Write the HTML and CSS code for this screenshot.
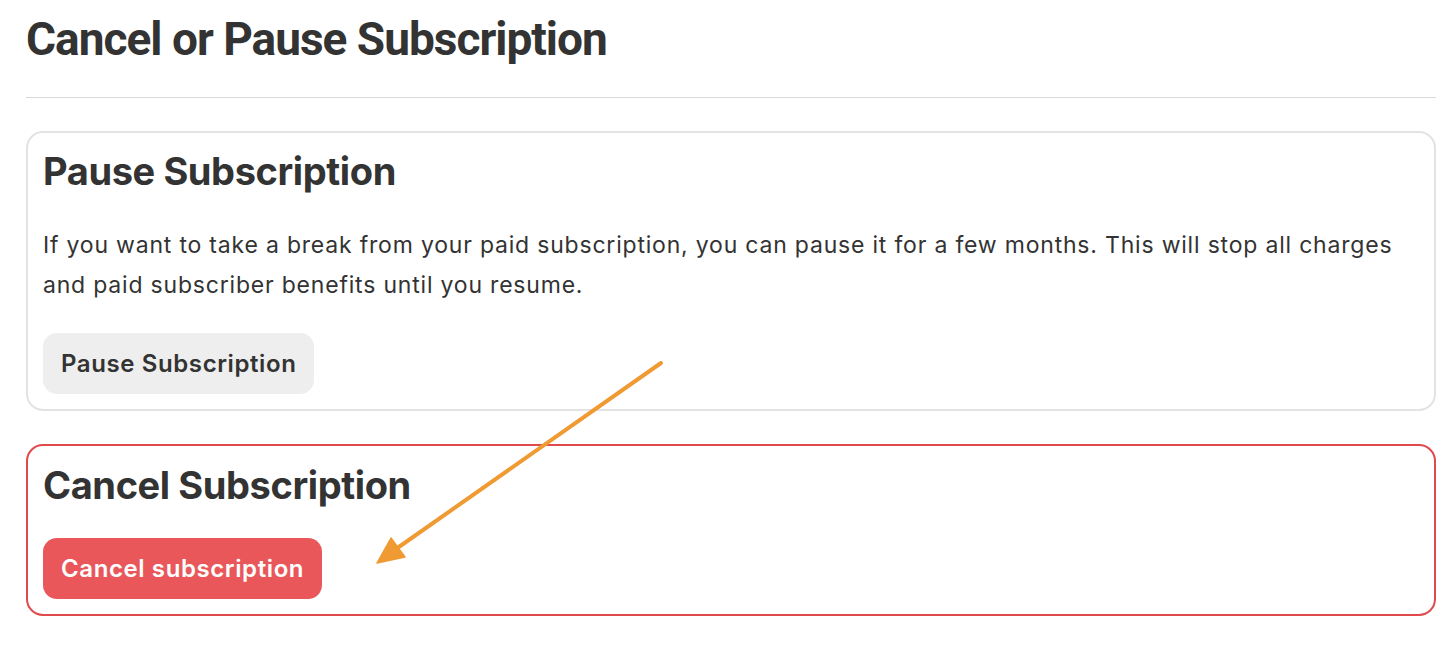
FILE: index.html
```html
<!DOCTYPE html>
<html lang="en">
<head>
<meta charset="utf-8">
<title>Cancel or Pause Subscription</title>
<link rel="stylesheet" href="styles.css">
</head>
<body>
<div class="page">
  <h1 class="title">Cancel or Pause Subscription</h1>
  <hr class="rule">
  <section class="card">
    <h2 class="card-title">Pause Subscription</h2>
    <p class="card-text">If you want to take a break from your paid subscription, you can pause it for a few months. This will stop all charges and paid subscriber benefits until you resume.</p>
    <button class="btn btn-muted" type="button">Pause Subscription</button>
  </section>
  <section class="card card-danger">
    <h2 class="card-title">Cancel Subscription</h2>
    <button class="btn btn-danger" type="button">Cancel subscription</button>
  </section>
  <svg class="annotation" width="1456" height="646" viewBox="0 0 1456 646" aria-hidden="true">
    <line x1="661" y1="363" x2="396" y2="549" stroke="#f09a33" stroke-width="4" stroke-linecap="round"/>
    <polygon points="377,563 391,538 405,557" fill="#f09a33" stroke="#f09a33" stroke-width="1.5" stroke-linejoin="round"/>
  </svg>
</div>
</body>
</html>
```
FILE: styles.css
```css
* { box-sizing: border-box; }

html, body {
  margin: 0;
  background: #ffffff;
}

body {
  font-family: "Inter", "Noto Sans", sans-serif;
  color: #333333;
}

.page {
  position: relative;
  width: 1456px;
  height: 646px;
  padding: 11px 20px 0 26px;
  overflow: hidden;
}

.title {
  margin: 0;
  font-family: "Roboto", "Liberation Sans", sans-serif;
  font-weight: 700;
  font-size: 46px;
  line-height: 56px;
  letter-spacing: -1px;
  color: #333333;
}

.rule {
  margin: 30px 0 0;
  border: 0;
  height: 1px;
  background: #d9d9d9;
}

.card {
  margin-top: 33px;
  border: 2px solid #e3e3e3;
  border-radius: 17px;
  padding: 15px 16px 15px 15px;
}

.card-danger {
  border-color: #e04a4d;
  padding-top: 16px;
}

.card-title {
  margin: 0;
  font-weight: 700;
  font-size: 38px;
  line-height: 46px;
  letter-spacing: -0.4px;
  color: #333333;
}

.card-text {
  margin: 31px 0 28px;
  font-size: 23px;
  line-height: 40px;
  letter-spacing: 0.8px;
  color: #333333;
}

.card-danger .card-title + .btn {
  margin-top: 30px;
}

.btn {
  display: block;
  height: 61px;
  padding: 0 18px;
  border: 0;
  border-radius: 14px;
  font-family: "Inter", "Noto Sans", sans-serif;
  font-weight: 600;
  font-size: 24px;
  line-height: 61px;
  letter-spacing: 0.6px;
  cursor: pointer;
}

.btn-muted {
  background: #eeeeee;
  color: #333333;
}

.btn-danger {
  background: #e9575a;
  color: #ffffff;
}

.annotation {
  position: absolute;
  top: 0;
  left: 0;
  pointer-events: none;
}
```
